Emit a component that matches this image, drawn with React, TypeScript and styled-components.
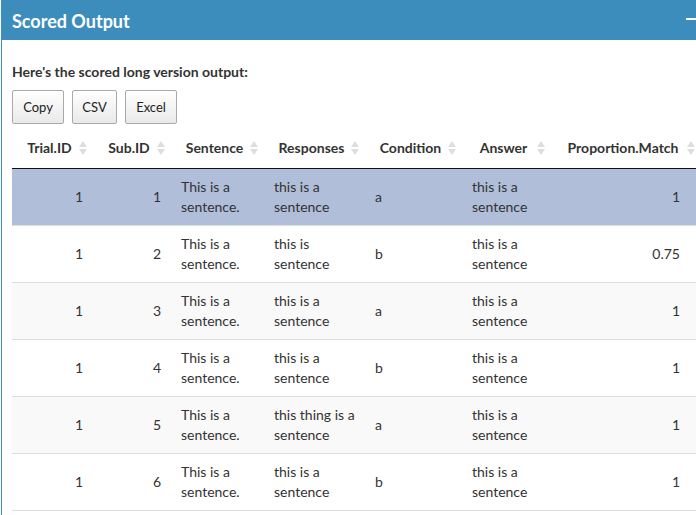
import React from "react";
import styled, { createGlobalStyle } from "styled-components";

const GlobalStyle = createGlobalStyle`
  html, body {
    margin: 0;
    padding: 0;
    background: #ffffff;
  }
  body {
    font-family: Lato, "Liberation Sans", sans-serif;
    font-size: 14px;
    color: #333333;
    overflow: hidden;
  }
`;

interface Row {
  trial: number;
  sub: number;
  sentence: string;
  response: string;
  condition: string;
  answer: string;
  match: string;
}

const rows: Row[] = [
  { trial: 1, sub: 1, sentence: "This is a sentence.", response: "this is a sentence", condition: "a", answer: "this is a sentence", match: "1" },
  { trial: 1, sub: 2, sentence: "This is a sentence.", response: "this is sentence", condition: "b", answer: "this is a sentence", match: "0.75" },
  { trial: 1, sub: 3, sentence: "This is a sentence.", response: "this is a sentence", condition: "a", answer: "this is a sentence", match: "1" },
  { trial: 1, sub: 4, sentence: "This is a sentence.", response: "this is a sentence", condition: "b", answer: "this is a sentence", match: "1" },
  { trial: 1, sub: 5, sentence: "This is a sentence.", response: "this thing is a sentence", condition: "a", answer: "this is a sentence", match: "1" },
  { trial: 1, sub: 6, sentence: "This is a sentence.", response: "this is a sentence", condition: "b", answer: "this is a sentence", match: "1" },
];

const columns = [
  { label: "Trial.ID", width: 81 },
  { label: "Sub.ID", width: 78 },
  { label: "Sentence", width: 93 },
  { label: "Responses", width: 101 },
  { label: "Condition", width: 97 },
  { label: "Answer", width: 89 },
  { label: "Proportion.Match", width: 150 },
];

const Box = styled.div`
  margin-left: 1px;
  border-left: 1px solid #3c8dbc;
  border-top: 1px solid #3c8dbc;
  height: 515px;
  box-sizing: border-box;
  overflow: hidden;
`;

const BoxHeader = styled.div`
  background: #3c8dbc;
  height: 39px;
  display: flex;
  align-items: center;
  justify-content: space-between;
  padding: 0 0 0 10px;
`;

const BoxTitle = styled.h3`
  margin: 0;
  font-size: 18px;
  font-weight: 700;
  color: #ffffff;
  line-height: 1;
`;

const Collapse = styled.span`
  width: 10px;
  height: 2px;
  background: #ffffff;
  margin-top: -4px;
`;

const BoxBody = styled.div`
  padding: 22px 0 0 10px;
`;

const Intro = styled.p`
  margin: 0;
  font-weight: 700;
  font-size: 14px;
  line-height: 20px;
  color: #333333;
`;

const ButtonRow = styled.div`
  display: flex;
  gap: 8px;
  margin-top: 8px;
`;

const ExportButton = styled.button<{ $w: number }>`
  width: ${({ $w }) => $w}px;
  height: 34px;
  border: 1px solid #a9a9a9;
  border-radius: 2px;
  background: linear-gradient(to bottom, #ffffff 0%, #e9e9e9 100%);
  font-family: inherit;
  font-size: 13px;
  color: #222222;
  padding: 0;
  cursor: pointer;
`;

const Table = styled.table`
  margin-top: 4px;
  border-collapse: collapse;
  table-layout: fixed;
  width: 689px;

  tbody tr:last-child td {
    border-bottom: 1px solid #dddddd;
  }
`;

const HeadCell = styled.th`
  position: relative;
  padding: 10px 18px 10px 12px;
  font-weight: 700;
  font-size: 14px;
  line-height: 20px;
  text-align: center;
  white-space: nowrap;
  color: #333333;
  border-bottom: 1px solid #111111;
`;

const SortIcon = styled.svg`
  position: absolute;
  right: 6px;
  top: 50%;
  margin-top: -8px;
`;

const BodyRow = styled.tr<{ $bg: string }>`
  background: ${({ $bg }) => $bg};
`;

const Cell = styled.td<{ $align?: string; $pr?: number }>`
  padding: 8px ${({ $pr }) => $pr ?? 10}px 8px 10px;
  border-top: 1px solid #dddddd;
  font-size: 14px;
  line-height: 20px;
  height: 40px;
  text-align: ${({ $align }) => $align ?? "left"};
  vertical-align: middle;
  color: #333333;
`;

function Sort() {
  return (
    <SortIcon width="8" height="16" viewBox="0 0 8 16">
      <path d="M4 1 L8 7 L0 7 Z" fill="#dedede" />
      <path d="M4 15 L8 9 L0 9 Z" fill="#dedede" />
    </SortIcon>
  );
}

function rowBg(i: number) {
  if (i === 0) return "#b0bed9";
  return i % 2 === 0 ? "#f9f9f9" : "#ffffff";
}

export default function App(): React.JSX.Element {
  return (
    <>
      <GlobalStyle />
      <Box>
        <BoxHeader>
          <BoxTitle>Scored Output</BoxTitle>
          <Collapse />
        </BoxHeader>
        <BoxBody>
          <Intro>Here's the scored long version output:</Intro>
          <ButtonRow>
            <ExportButton $w={52}>Copy</ExportButton>
            <ExportButton $w={45}>CSV</ExportButton>
            <ExportButton $w={52}>Excel</ExportButton>
          </ButtonRow>
          <Table>
            <colgroup>
              {columns.map((c) => (
                <col key={c.label} style={{ width: c.width }} />
              ))}
            </colgroup>
            <thead>
              <tr>
                {columns.map((c) => (
                  <HeadCell key={c.label}>
                    {c.label}
                    <Sort />
                  </HeadCell>
                ))}
              </tr>
            </thead>
            <tbody>
              {rows.map((r, i) => (
                <BodyRow key={i} $bg={rowBg(i)}>
                  <Cell $align="right">{r.trial}</Cell>
                  <Cell $align="right">{r.sub}</Cell>
                  <Cell>{r.sentence}</Cell>
                  <Cell>{r.response}</Cell>
                  <Cell>{r.condition}</Cell>
                  <Cell>{r.answer}</Cell>
                  <Cell $align="right" $pr={21}>{r.match}</Cell>
                </BodyRow>
              ))}
            </tbody>
          </Table>
        </BoxBody>
      </Box>
    </>
  );
}
